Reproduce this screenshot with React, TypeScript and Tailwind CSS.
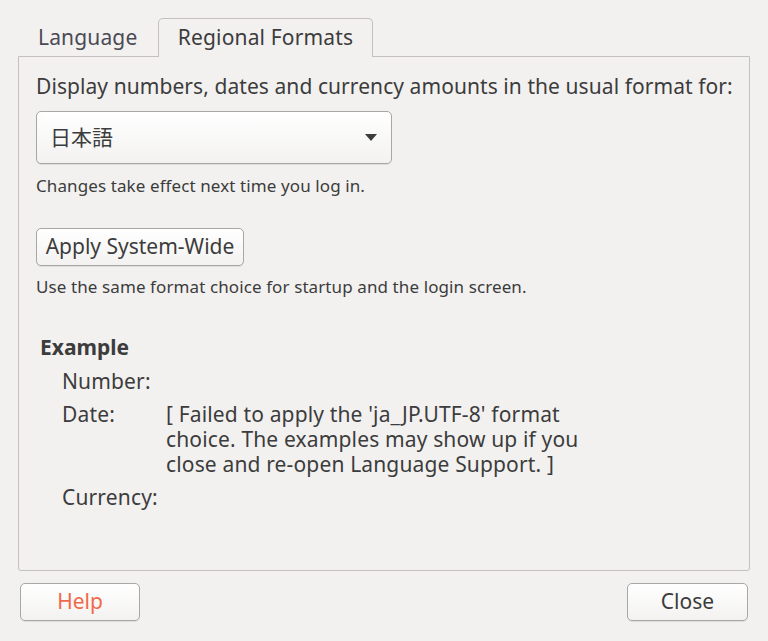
import React from "react";

const font = { fontFamily: '"Noto Sans", "Noto Sans CJK JP", sans-serif' };

export default function App() {
  return (
    <div
      className="w-[768px] h-[641px] bg-[#f2f1f0] text-[#3c3c3c] pt-[18px] px-[18px] flex flex-col"
      style={font}
    >
      {/* Tabs */}
      <div className="flex items-end h-[39px] relative z-10">
        <div className="w-[140px] h-[38px] pl-[20px] flex items-center text-[21px] tracking-[0.15px] text-[#4a4a55]">
          Language
        </div>
        <div className="w-[215px] h-[39px] border border-b-0 border-[#c4c1bc] rounded-t-[5px] bg-[#f2f1f0] flex items-center justify-center text-[21px] tracking-[0.15px] text-[#3c3c3c]">
          Regional Formats
        </div>
      </div>

      {/* Panel */}
      <div className="-mt-px w-[732px] h-[515px] border border-[#c4c1bc] rounded-b-[3px] pl-[17px] pt-[17px] flex flex-col">
        <div className="text-[21px] leading-[24px] tracking-[0.07px]">
          Display numbers, dates and currency amounts in the usual format for:
        </div>

        <div className="mt-[13px] w-[356px] h-[53px] rounded-[5px] border border-[#a9a7a4] bg-gradient-to-b from-[#ffffff] to-[#f3f2f1] shadow-[0_1px_0_rgba(0,0,0,0.08)] flex items-center justify-between pl-[13px] pr-[14px]">
          <span className="text-[21px]">日本語</span>
          <svg width="12" height="7" viewBox="0 0 12 7">
            <path d="M0 0 H12 L6 7 Z" fill="#3c3c3c" />
          </svg>
        </div>

        <div className="mt-[12px] text-[17px] leading-[20px] tracking-[0.1px]">
          Changes take effect next time you log in.
        </div>

        <div className="mt-[32px] self-start h-[38px] w-[208px] rounded-[5px] border border-[#a9a7a4] bg-gradient-to-b from-[#ffffff] to-[#f3f2f1] shadow-[0_1px_0_rgba(0,0,0,0.08)] flex items-center justify-center text-[21px] tracking-[0px]">
          Apply System-Wide
        </div>

        <div className="mt-[11px] text-[17px] leading-[20px] tracking-[0.1px]">
          Use the same format choice for startup and the login screen.
        </div>

        <div className="mt-[38px] ml-[4px] text-[21px] leading-[24px] font-bold tracking-[0px]">
          Example
        </div>

        <div className="ml-[26px] mt-[10px] flex flex-col gap-[8px] text-[21px] leading-[25px] tracking-[0.15px]">
          <div className="flex">
            <div className="w-[104px]">Number:</div>
            <div></div>
          </div>
          <div className="flex">
            <div className="w-[104px]">Date:</div>
            <div className="w-[450px]">
              [ Failed to apply the 'ja_JP.UTF-8' format
              <br />
              choice. The examples may show up if you
              <br />
              close and re-open Language Support. ]
            </div>
          </div>
          <div className="flex">
            <div className="w-[104px]">Currency:</div>
            <div></div>
          </div>
        </div>
      </div>

      {/* Bottom buttons */}
      <div className="mt-[12px] flex justify-between px-[2px]">
        <div className="w-[120px] h-[38px] rounded-[5px] border border-[#a9a7a4] bg-gradient-to-b from-[#ffffff] to-[#f3f2f1] shadow-[0_1px_0_rgba(0,0,0,0.08)] flex items-center justify-center text-[21px] text-[#f0694a]">
          Help
        </div>
        <div className="w-[121px] h-[38px] rounded-[5px] border border-[#a9a7a4] bg-gradient-to-b from-[#ffffff] to-[#f3f2f1] shadow-[0_1px_0_rgba(0,0,0,0.08)] flex items-center justify-center text-[21px]">
          Close
        </div>
      </div>
    </div>
  );
}
